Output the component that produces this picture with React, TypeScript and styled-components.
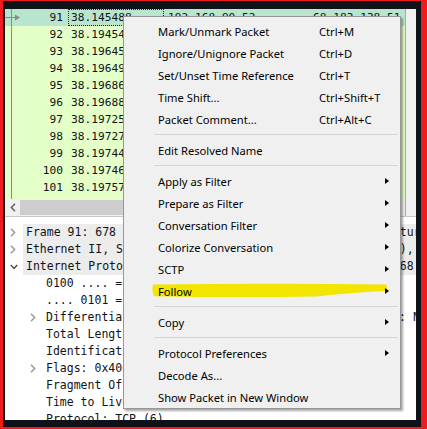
import React from 'react';
import styled, { createGlobalStyle } from 'styled-components';

const GlobalStyle = createGlobalStyle`
  html, body {
    margin: 0;
    padding: 0;
    background: #ffffff;
  }
  #root {
    width: 427px;
    height: 429px;
  }
`;

const MONO = `'DejaVu Sans Mono', 'Liberation Mono', monospace`;
const UI = `'Noto Sans', 'Open Sans', 'Liberation Sans', sans-serif`;

const Page = styled.div`
  position: relative;
  width: 427px;
  height: 429px;
  overflow: hidden;
`;

// red highlight box drawn round the window
const Frame = styled.div`
  box-sizing: border-box;
  width: 427px;
  height: 429px;
  border-style: solid;
  border-color: #ee1c1c;
  border-width: 1px 6px 2px 3px;
`;

const Bezel = styled.div`
  box-sizing: border-box;
  height: 100%;
  border-style: solid;
  border-color: #0f1219;
  border-width: 8px 5px 7px 2px;
  display: flex;
  flex-direction: column;
  overflow: hidden;
  background: #ffffff;
`;

const TopPane = styled.div`
  display: grid;
  grid-template-columns: 1fr 11px;
  grid-template-rows: 190px 17px;
  border-bottom: 1px solid #c8c8c8;
  flex: none;
`;

const PacketList = styled.div`
  background:
    linear-gradient(#8c8c8c, #8c8c8c) 6px 0 / 1px 100% no-repeat,
    #e4ffc7;
  font-family: ${MONO};
  font-size: 11.2px;
  color: #111318;
  overflow: hidden;
`;

const PacketRow = styled.div<{ $selected?: boolean }>`
  display: grid;
  grid-template-columns: 13px 50px 96px 149px 1fr;
  height: 17px;
  line-height: 17px;
  white-space: pre;
  background: ${(p) => (p.$selected ? '#b9e5cf' : 'transparent')};
`;

const Indicator = styled.div`
  position: relative;
  background: linear-gradient(#8c8c8c, #8c8c8c) 6px 0 / 1px 100% no-repeat;
  svg {
    position: absolute;
    left: 0;
    top: 0;
    overflow: visible;
  }
`;

const NoCell = styled.div`
  text-align: right;
  padding-right: 5px;
`;

const TimeCell = styled.div<{ $focus?: boolean }>`
  padding-left: 3px;
  overflow: hidden;
  outline: ${(p) => (p.$focus ? '1px dotted #222' : 'none')};
  outline-offset: -1px;
`;

const AddrCell = styled.div<{ $pad: number }>`
  padding-left: ${(p) => p.$pad}px;
  overflow: hidden;
`;

const VScroll = styled.div`
  grid-row: 1 / 3;
  grid-column: 2;
  background: #f0f0f0;
  border-left: 1px solid #a8a8a8;
`;

const HScroll = styled.div`
  display: flex;
  align-items: stretch;
  background: #f0f0f0;
`;

const ScrollButton = styled.div`
  width: 15px;
  flex: none;
  display: flex;
  align-items: center;
  justify-content: center;
`;

const ScrollThumb = styled.div`
  flex: 0 0 360px;
  margin: 1px 0;
  background: #cdcdcd;
`;

const DetailPane = styled.div`
  flex: 1;
  padding-top: 7px;
  font-family: ${MONO};
  font-size: 11.5px;
  color: #111318;
  overflow: hidden;
`;

const TreeRow = styled.div<{ $depth: number }>`
  display: flex;
  height: 17px;
  line-height: 17px;
  padding-left: ${(p) => p.$depth * 20}px;
  white-space: pre;
`;

const Twisty = styled.div`
  width: 18px;
  flex: none;
  display: flex;
  align-items: center;
  padding-left: 5px;
  box-sizing: border-box;
`;

const TreeLabel = styled.div<{ $shade?: boolean }>`
  flex: 1;
  padding-left: 3px;
  background: ${(p) => (p.$shade ? '#ececec' : 'transparent')};
`;

const Menu = styled.div`
  position: absolute;
  left: 123px;
  top: 16px;
  width: 278px;
  box-sizing: border-box;
  padding: 3px 0 0;
  background: #f0f0f0;
  border: 1px solid #979797;
  box-shadow: 2px 2px 2px rgba(0, 0, 0, 0.35);
  font-family: ${UI};
  font-size: 11.2px;
  color: #000000;
`;

const Item = styled.div`
  position: relative;
  height: 22px;
  display: grid;
  grid-template-columns: 161px 1fr 16px;
  align-items: center;
  padding: 0 11px 0 34px;
  white-space: nowrap;
`;

const ItemLabel = styled.span`
  position: relative;
  z-index: 1;
`;

const Shortcut = styled.span`
  position: relative;
  z-index: 1;
`;

const SubArrow = styled.span`
  justify-self: end;
  width: 0;
  height: 0;
  border-left: 4px solid #000;
  border-top: 3.5px solid transparent;
  border-bottom: 3.5px solid transparent;
  position: relative;
  z-index: 1;
`;

const Separator = styled.div`
  height: 1px;
  margin: 4px 2px 4px 30px;
  background: #d5d5d5;
`;

const Highlight = styled.svg`
  position: absolute;
  left: 0;
  top: 0;
  z-index: 0;
`;

const packets = [
  { no: 91, time: '38.145488', src: '192.168.90.52', dst: '68.183.138.51', selected: true },
  { no: 92, time: '38.194541', src: '192.168.90.52', dst: '13.107.42.125' },
  { no: 93, time: '38.196452', src: '68.183.138.51', dst: '192.168.90.52' },
  { no: 94, time: '38.196497', src: '192.168.90.52', dst: '68.183.138.51' },
  { no: 95, time: '38.196863', src: '68.183.138.51', dst: '192.168.90.52' },
  { no: 96, time: '38.196889', src: '192.168.90.52', dst: '68.183.138.51' },
  { no: 97, time: '38.197256', src: '68.183.138.51', dst: '192.168.90.52' },
  { no: 98, time: '38.197271', src: '192.168.90.52', dst: '68.183.138.51' },
  { no: 99, time: '38.197443', src: '68.183.138.51', dst: '192.168.90.52' },
  { no: 100, time: '38.197465', src: '192.168.90.52', dst: '68.183.138.51' },
  { no: 101, time: '38.197572', src: '68.183.138.51', dst: '192.168.90.52' },
];

type Node = { depth: number; text: string; state?: 'open' | 'closed'; top?: boolean };

const tree: Node[] = [
  { depth: 0, state: 'closed', top: true, text: 'Frame 91: 678 bytes on wire (5424 bits), 678 bytes captured (5424 bits) on interface 0' },
  { depth: 0, state: 'closed', top: true, text: 'Ethernet II, Src: IntelCor_3c:5a:1f (8c:16:45:3c:5a:1f), Dst: Tp-LinkT_8e:21:40 (50:c7:bf:8e:21:40)' },
  { depth: 0, state: 'open', top: true, text: 'Internet Protocol Version 4, Src: 192.168.90.52, Dst: 68.183.138.51' },
  { depth: 1, text: '0100 .... = Version: 4' },
  { depth: 1, text: '.... 0101 = Header Length: 20 bytes (5)' },
  { depth: 1, state: 'closed', text: 'Differentiated Services Field: 0x00 (DSCP: CS0, ECN: Not-ECT)' },
  { depth: 1, text: 'Total Length: 664' },
  { depth: 1, text: 'Identification: 0x1c2b (7211)' },
  { depth: 1, state: 'closed', text: "Flags: 0x4000, Don't fragment" },
  { depth: 1, text: 'Fragment Offset: 0' },
  { depth: 1, text: 'Time to Live: 128' },
  { depth: 1, text: 'Protocol: TCP (6)' },
  { depth: 1, text: 'Header checksum: 0x0000 [validation disabled]' },
];

type Entry =
  | { sep: true }
  | { label: string; shortcut?: string; sub?: boolean; marked?: boolean };

const menu: Entry[] = [
  { label: 'Mark/Unmark Packet', shortcut: 'Ctrl+M' },
  { label: 'Ignore/Unignore Packet', shortcut: 'Ctrl+D' },
  { label: 'Set/Unset Time Reference', shortcut: 'Ctrl+T' },
  { label: 'Time Shift...', shortcut: 'Ctrl+Shift+T' },
  { label: 'Packet Comment...', shortcut: 'Ctrl+Alt+C' },
  { sep: true },
  { label: 'Edit Resolved Name' },
  { sep: true },
  { label: 'Apply as Filter', sub: true },
  { label: 'Prepare as Filter', sub: true },
  { label: 'Conversation Filter', sub: true },
  { label: 'Colorize Conversation', sub: true },
  { label: 'SCTP', sub: true },
  { label: 'Follow', sub: true, marked: true },
  { sep: true },
  { label: 'Copy', sub: true },
  { sep: true },
  { label: 'Protocol Preferences', sub: true },
  { label: 'Decode As...' },
  { label: 'Show Packet in New Window' },
];

function Chevron({ open }: { open?: boolean }) {
  return open ? (
    <svg width="8" height="6" viewBox="0 0 8 6">
      <polyline points="0.8,1 4,4.4 7.2,1" fill="none" stroke="#4a4a4a" strokeWidth="1.5" />
    </svg>
  ) : (
    <svg width="6" height="9" viewBox="0 0 6 9">
      <polyline points="1,0.8 4.6,4.5 1,8.2" fill="none" stroke="#9a9a9a" strokeWidth="1.5" />
    </svg>
  );
}

export default function App() {
  return (
    <Page>
      <GlobalStyle />
      <Frame>
        <Bezel>
          <TopPane>
            <PacketList>
              {packets.map((p) => (
                <PacketRow key={p.no} $selected={p.selected}>
                  <Indicator>
                    {p.selected && (
                      <svg width="16" height="17" viewBox="0 0 16 17">
                        <line x1="0" y1="8.5" x2="11" y2="8.5" stroke="#8a8a8a" strokeWidth="1" />
                        <polygon points="10,5.5 15,8.5 10,11.5" fill="#8a8a8a" />
                      </svg>
                    )}
                  </Indicator>
                  <NoCell>{p.no}</NoCell>
                  <TimeCell $focus={p.selected}>{p.time}</TimeCell>
                  <AddrCell $pad={4}>{p.src}</AddrCell>
                  <AddrCell $pad={0}>{p.dst}</AddrCell>
                </PacketRow>
              ))}
            </PacketList>
            <VScroll />
            <HScroll>
              <ScrollButton>
                <svg width="6" height="9" viewBox="0 0 6 9">
                  <polyline points="5,0.8 1.4,4.5 5,8.2" fill="none" stroke="#606060" strokeWidth="1.5" />
                </svg>
              </ScrollButton>
              <ScrollThumb />
            </HScroll>
          </TopPane>
          <DetailPane>
            {tree.map((n, i) => (
              <TreeRow key={i} $depth={n.depth}>
                <Twisty>{n.state && <Chevron open={n.state === 'open'} />}</Twisty>
                <TreeLabel $shade={n.top}>{n.text}</TreeLabel>
              </TreeRow>
            ))}
          </DetailPane>
        </Bezel>
      </Frame>

      <Menu>
        {menu.map((m, i) =>
          'sep' in m ? (
            <Separator key={i} />
          ) : (
            <Item key={i}>
              {m.marked && (
                <Highlight width="276" height="22" viewBox="0 0 276 22">
                  <path
                    d="M29 4.5 Q 150 2.8 262 4.5 L 263.5 8 L 262 11 Q 232 12 192 16.5 Q 110 17.8 30 16.2 Q 27.5 10 29 4.5 Z"
                    fill="#f2e600"
                  />
                </Highlight>
              )}
              <ItemLabel>{m.label}</ItemLabel>
              <Shortcut>{m.shortcut}</Shortcut>
              {m.sub ? <SubArrow /> : <span />}
            </Item>
          )
        )}
      </Menu>
    </Page>
  );
}
